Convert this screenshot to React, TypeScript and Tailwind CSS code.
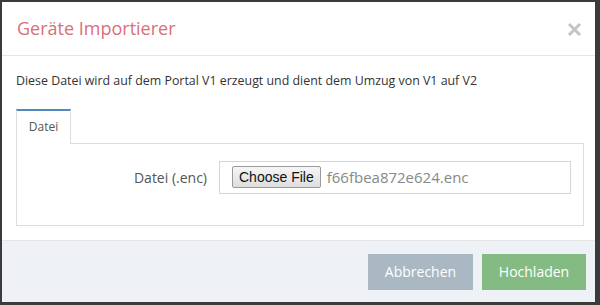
import React from 'react';

export default function App() {
  return (
    <div className="w-[600px] h-[305px] bg-[#3b3b3b] pl-[2px] pt-[2px] pr-[5px] pb-[3px] font-['Open_Sans',sans-serif]">
      <div className="flex h-full flex-col bg-white">
        <div className="flex h-[54px] items-center justify-between border-b border-[#e5e5e5] pl-[15px] pr-[13px]">
          <h2 className="text-[18px] text-[#d9707a]">Geräte Importierer</h2>
          <svg width="15" height="15" viewBox="0 0 15 15" className="mt-[2px]">
            <path d="M2 2 L13 13 M13 2 L2 13" stroke="#c4c4c4" strokeWidth="3" />
          </svg>
        </div>
        <div className="flex-1 px-[14px] pt-[16px]">
          <p className="text-[12.4px] text-[#333]">
            Diese Datei wird auf dem Portal V1 erzeugt und dient dem Umzug von V1 auf V2
          </p>
          <div className="mt-[18px] flex">
            <div className="relative -mb-px flex h-[35px] w-[55px] items-center justify-center border border-b-0 border-[#dddddd] border-t-[2px] border-t-[#4f8ac0] bg-white text-[12px] text-[#555]">
              Datei
            </div>
          </div>
          <div className="flex h-[83px] w-[568px] items-center border border-[#dddddd] pb-[14px]">
            <label className="w-[190px] text-right text-[14px] text-[#555]">Datei (.enc)</label>
            <div className="ml-[12px] flex h-[33px] w-[352px] items-center border border-[#d5d5d5] pl-[12px]">
              <button className="h-[22px] rounded-[2px] border border-[#9a9a9a] bg-gradient-to-b from-[#f6f6f6] to-[#dedede] px-[6px] font-['Liberation_Sans',Arial,sans-serif] text-[14px] text-[#111]">
                Choose File
              </button>
              <span className="ml-[6px] text-[15px] text-[#888]">f66fbea872e624.enc</span>
            </div>
          </div>
        </div>
        <div className="flex h-[62px] items-center justify-end gap-[9px] border-t border-[#e5e5e5] bg-[#eef1f5] pr-[9px]">
          <button className="h-[36px] w-[105px] bg-[#a9b8c3] text-[14px] text-white">Abbrechen</button>
          <button className="h-[36px] w-[104px] bg-[#84bb82] text-[14px] text-white">Hochladen</button>
        </div>
      </div>
    </div>
  );
}
